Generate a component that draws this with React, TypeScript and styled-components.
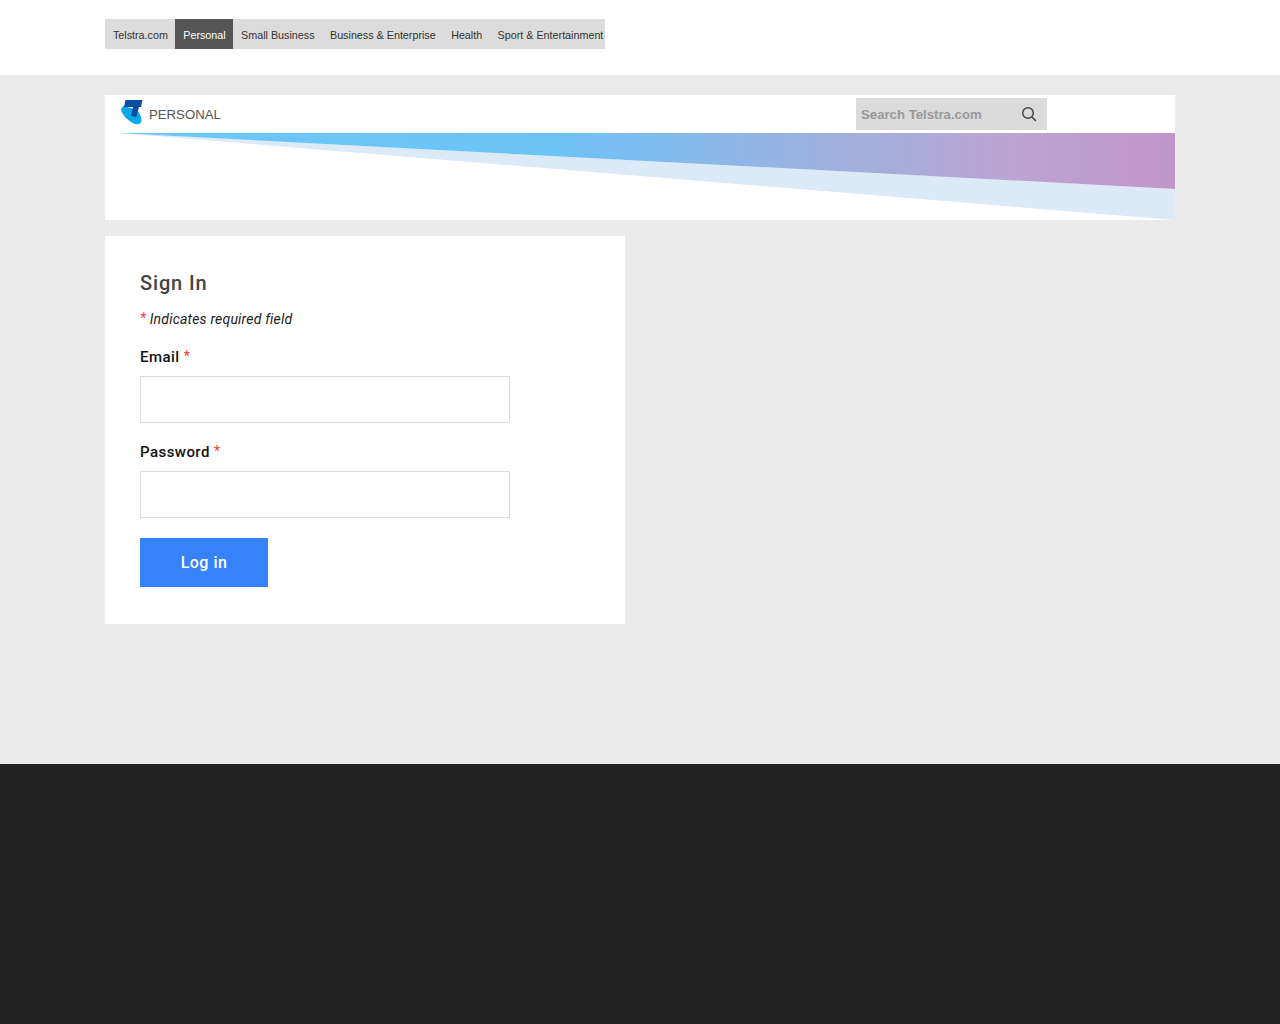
import React from "react";
import styled, { createGlobalStyle } from "styled-components";

const GlobalStyle = createGlobalStyle`
  html, body {
    margin: 0;
    padding: 0;
    background: #ebebeb;
  }
  * {
    box-sizing: border-box;
  }
`;

const Page = styled.div`
  display: flex;
  flex-direction: column;
  min-height: 1024px;
  font-family: "Roboto", "Liberation Sans", sans-serif;
`;
const TopBar = styled.header`
  height: 75px;
  background: #fff;
  padding: 19px 105px 0;
`;
const SiteNav = styled.nav`
  display: flex;
  width: 500px;
  height: 30px;
  background: #dcdcdc;
`;
const SiteLink = styled.a<{ $active?: boolean }>`
  display: flex;
  align-items: center;
  height: 30px;
  padding: 1px 7.5px 0 7.9px;
  font: 10.75px "Liberation Sans", Arial, sans-serif;
  white-space: nowrap;
  color: ${({ $active }) => ($active ? "#fff" : "#333")};
  background: ${({ $active }) => ($active ? "#555" : "transparent")};
`;
const Main = styled.main`
  flex: 0 0 689px;
  padding: 20px 105px 0;
  background: #ebebeb;
`;
const Banner = styled.div`
  width: 1070px;
  height: 125px;
  background: #fff;
`;
const BannerTop = styled.div`
  display: flex;
  justify-content: space-between;
  height: 38px;
  padding: 3px 128px 0 15px;
`;
const Brand = styled.div`
  display: flex;
  align-items: flex-start;
  gap: 5px;
  height: 32px;
  font: 13.2px/33px "Liberation Sans", Arial, sans-serif;
  color: #555;
`;
const Logo = styled.svg`
  display: block;
  margin-top: 1px;
`;
const Search = styled.div`
  display: flex;
  align-items: center;
  justify-content: space-between;
  width: 191px;
  height: 32px;
  padding: 0 10px 0 5px;
  background: #dbdbdb;
  font: bold 13.2px "Liberation Sans", Arial, sans-serif;
  color: #999;
`;
const Wedge = styled.svg`
  display: block;
  width: 1070px;
  height: 87px;
`;
const Card = styled.section`
  width: 520px;
  height: 388px;
  margin-top: 16px;
  padding: 35px;
  background: #fff;
`;
const Title = styled.h1`
  margin: 0;
  font-size: 20px;
  line-height: 24px;
  font-weight: 500;
  letter-spacing: 0.85px;
  color: #444;
`;
const Note = styled.p`
  margin: 14px 0 0;
  font-size: 14px;
  line-height: 20px;
  font-style: italic;
  letter-spacing: 0.2px;
  color: #222;
`;
const Star = styled.span`
  color: #f33;
  font-weight: 400;
  font-size: 14px;
  line-height: 1;
  vertical-align: 1px;
`;
const Field = styled.div`
  margin-top: 18px;
  & + & {
    margin-top: 19px;
  }
`;
const Label = styled.label`
  display: block;
  font-size: 15px;
  line-height: 20px;
  font-weight: 500;
  letter-spacing: 0.45px;
  color: #111;
`;
const Input = styled.input`
  display: block;
  width: 370px;
  height: 47px;
  margin-top: 9px;
  border: 1px solid #dcdcdc;
  background: #fff;
`;
const Submit = styled.button`
  display: block;
  width: 128px;
  height: 49px;
  margin-top: 20px;
  border: 0;
  background: #3682fb;
  color: #fff;
  font-family: inherit;
  font-size: 16px;
  font-weight: 500;
  letter-spacing: 0.5px;
`;
const Footer = styled.footer`
  flex: 0 0 260px;
  background: #212121;
`;

const sites = [
  "Telstra.com",
  "Personal",
  "Small Business",
  "Business & Enterprise",
  "Health",
  "Sport & Entertainment",
];

const App = () => {
  return (
    <Page>
      <GlobalStyle />
      <TopBar>
        <SiteNav>
          {sites.map((site) => (
            <SiteLink key={site} $active={site === "Personal"}>
              {site}
            </SiteLink>
          ))}
        </SiteNav>
      </TopBar>
      <Main>
        <Banner>
          <BannerTop>
            <Brand>
              <Logo width="24" height="27" viewBox="0 0 24 27">
                <path
                  d="M4 7 C1.5 8 0.5 10 1.5 12.5 C3.5 17 9 23 15 25 C18.5 26 21.5 24.5 21.5 21.5 C21.5 17 19.5 14 17 11 Z"
                  fill="#0aa8e8"
                />
                <path
                  d="M5.5 1 H22.5 L21 8 H19 L16.5 17.5 C14.5 18 12.5 17.5 11 16.5 L13 8 H4 Z"
                  fill="#0a4ea0"
                />
              </Logo>
              PERSONAL
            </Brand>
            <Search>
              Search Telstra.com
              <svg width="16" height="16" viewBox="0 0 16 16" fill="none" stroke="#444" strokeWidth="1.5">
                <circle cx="7" cy="7" r="5.3" />
                <path d="M11 11 L14.5 14.5" strokeLinecap="round" />
              </svg>
            </Search>
          </BannerTop>
          <Wedge viewBox="0 0 1070 87">
            <defs>
              <linearGradient id="bannerFade" x1="0" x2="1" y1="0" y2="0">
                <stop offset="0" stopColor="#6cc6f8" />
                <stop offset="0.4" stopColor="#6cc3f7" />
                <stop offset="0.68" stopColor="#9fb0de" />
                <stop offset="0.85" stopColor="#bca3d2" />
                <stop offset="1" stopColor="#c196c8" />
              </linearGradient>
            </defs>
            <polygon points="13,0 1070,56 1070,87" fill="#dce9f6" />
            <polygon points="13,0 1070,0 1070,56" fill="url(#bannerFade)" />
          </Wedge>
        </Banner>
        <Card>
          <Title>Sign In</Title>
          <Note>
            <Star>*</Star> Indicates required field
          </Note>
          <Field>
            <Label>
              Email <Star>*</Star>
            </Label>
            <Input type="text" />
          </Field>
          <Field>
            <Label>
              Password <Star>*</Star>
            </Label>
            <Input type="password" />
          </Field>
          <Submit>Log in</Submit>
        </Card>
      </Main>
      <Footer />
    </Page>
  );
};

export default App;
